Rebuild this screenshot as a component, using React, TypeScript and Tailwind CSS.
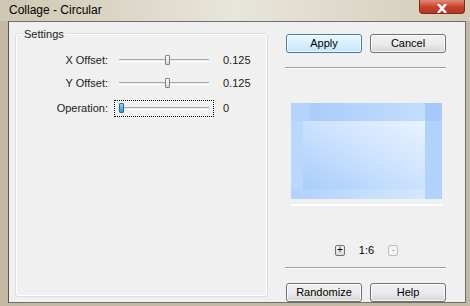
const font = { fontFamily: '"Liberation Sans", Arial, sans-serif' };

const Slider = ({ pos, focused, blue }: { pos: number; focused?: boolean; blue?: boolean }) => (
  <div
    className={`w-[100px] h-[17px] flex items-center px-[4px] border border-dotted ${
      focused ? "border-black" : "border-transparent"
    }`}
  >
    <div className="relative w-full h-[3px] bg-[#e6e9ea] border-t border-[#a9a9a9] border-b border-b-white">
      <div
        className={`absolute top-[-5px] w-[5px] h-[10px] rounded-[1px] border ${
          blue
            ? "border-[#2a6c9c] bg-gradient-to-b from-[#8fd1f7] to-[#2f97d8]"
            : "border-[#808080] bg-gradient-to-b from-white to-[#d8d8d8]"
        }`}
        style={{ left: pos }}
      />
    </div>
  </div>
);

const Row = ({ label, value, children }: { label: string; value: string; children: React.ReactNode }) => (
  <div className="flex items-center h-[17px]">
    <div className="w-[92px] text-right text-[11px] text-[#222]">{label}</div>
    <div className="ml-[6px]">{children}</div>
    <div className="ml-[9px] text-[11px] text-[#222]">{value}</div>
  </div>
);

const Btn = ({ children, primary }: { children: React.ReactNode; primary?: boolean }) => (
  <button
    className={`w-[76px] h-[19px] rounded-[3px] border text-[11px] text-black leading-none shadow-[inset_0_0_0_1px_rgba(255,255,255,0.8)] ${
      primary
        ? "border-[#3c7fb1] bg-gradient-to-b from-[#eaf6fd] via-[#d9f0fc] to-[#bee6fd]"
        : "border-[#707070] bg-gradient-to-b from-[#f2f2f2] via-[#ebebeb] to-[#d6d6d6]"
    }`}
  >
    {children}
  </button>
);

export default function App() {
  return (
    <div
      className="w-[470px] h-[306px] overflow-hidden flex flex-col bg-[#c8bfa9]"
      style={font}
    >
      <div className="h-[21px] flex items-start justify-between bg-gradient-to-r from-[#cfc7b1] via-[#e8e5db] to-[#d3ccb7]">
        <div className="pl-[9px] pt-[1px] text-[12px] text-black">Collage - Circular</div>
        <div className="mr-[5px] w-[46px] h-[14px] rounded-b-[4px] border border-t-0 border-[#7a2c20] bg-gradient-to-b from-[#e08a78] via-[#c8442f] to-[#b83520] flex items-end justify-center">
          <svg width="12" height="9" viewBox="0 0 12 9">
            <path d="M2 0 L10 9 M10 0 L2 9" stroke="white" strokeWidth="2.5" />
          </svg>
        </div>
      </div>
      <div className="flex-1 flex pl-[8px] pr-[4px] pb-[3px] bg-[#c3b9a2]">
        <div className="flex-1 flex border border-[#6e6e6e] border-l-[#555] bg-[#f0f0f0] pt-[11px] pl-[6px]">
          <div className="relative w-[253px] h-[264px] rounded-[3px] border border-[#d5dfe5] shadow-[inset_0_0_0_1px_white]">
            <div className="absolute left-[6px] top-[-8px] px-[2px] bg-[#f0f0f0] text-[11px] text-[#222]">
              Settings
            </div>
            <div className="mt-[18px] flex flex-col gap-[6px]">
              <Row label="X Offset:" value="0.125">
                <Slider pos={46} />
              </Row>
              <Row label="Y Offset:" value="0.125">
                <Slider pos={46} />
              </Row>
              <div className="mt-[2px]">
                <Row label="Operation:" value="0">
                  <Slider pos={0} focused blue />
                </Row>
              </div>
            </div>
          </div>
          <div className="ml-[17px] w-[161px] flex flex-col">
            <div className="mt-[1px] flex gap-[8px] pl-[1px]">
              <Btn primary>Apply</Btn>
              <Btn>Cancel</Btn>
            </div>
            <div className="mt-[14px] h-[2px] border-t border-[#a0a0a0] border-b border-b-white" />
            <div className="mt-[34px] ml-[6px] w-[151px] h-[96px] flex bg-[#bcd9fd]">
              <div className="w-[12px] flex flex-col">
                <div className="h-[18px] bg-[#b3d3fc]" />
                <div className="flex-1 bg-[#bad8fd]" />
                <div className="h-[10px] bg-[#b3d3fc]" />
              </div>
              <div className="flex-1 flex flex-col">
                <div className="h-[18px] flex">
                  <div className="w-[7px] bg-[#b3d3fc]" />
                  <div className="flex-1 bg-gradient-to-r from-[#a9ccfb] to-[#c3defd]" />
                </div>
                <div className="flex-1 bg-gradient-to-tr from-[#a9cdfb] via-[#cbe2fe] to-[#e8f3ff]" />
                <div className="h-[10px] bg-gradient-to-r from-[#b2d3fc] to-[#d4e8fe]" />
              </div>
              <div className="w-[17px] flex flex-col">
                <div className="h-[18px] bg-[#a4c9fa]" />
                <div className="flex-1 bg-[#b1d2fb]" />
              </div>
            </div>
            <div className="mt-[5px] ml-[6px] w-[151px] h-[2px] bg-white" />
            <div className="mt-[36px] flex items-center justify-center gap-[14px] pl-[2px]">
              <div className="w-[10px] h-[11px] rounded-[2px] border border-[#707070] bg-gradient-to-b from-[#f4f4f4] to-[#d9d9d9] flex items-center justify-center text-[10px] leading-none text-black">
                +
              </div>
              <div className="text-[11px] text-black">1:6</div>
              <div className="w-[10px] h-[11px] rounded-[2px] border border-[#bcbcbc] bg-[#f4f4f4] flex items-center justify-center text-[9px] leading-none text-[#9a9a9a]">
                -
              </div>
            </div>
            <div className="mt-[8px] h-[2px] border-t border-[#a0a0a0] border-b border-b-white" />
            <div className="mt-[14px] flex gap-[8px] pl-[1px]">
              <Btn>Randomize</Btn>
              <Btn>Help</Btn>
            </div>
          </div>
        </div>
      </div>
    </div>
  );
}
